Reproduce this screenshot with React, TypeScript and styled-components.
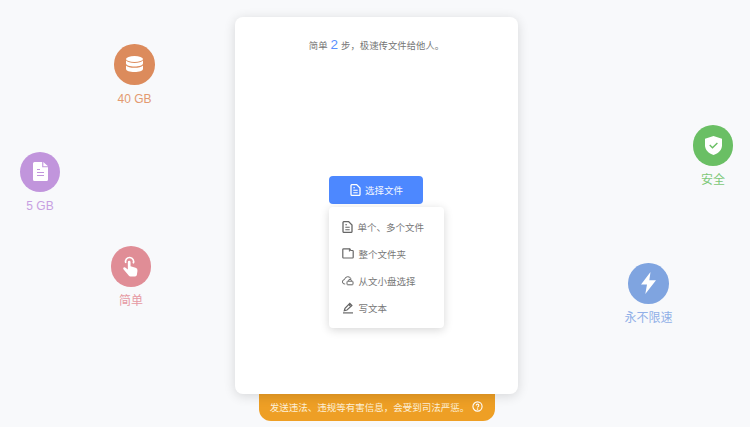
import styled, { createGlobalStyle } from 'styled-components';
import type { ReactNode } from 'react';

const GlobalStyle = createGlobalStyle`
  html, body {
    margin: 0;
    padding: 0;
    height: 100%;
    background: #f8f9fb;
    font-family: "Liberation Sans", "Noto Sans CJK SC", sans-serif;
  }
`;

const Page = styled.main`
  position: relative;
  width: 750px;
  height: 427px;
  overflow: hidden;
  display: flex;
  flex-direction: column;
  align-items: center;
  padding-top: 17px;
  padding-left: 3px;
  box-sizing: border-box;
`;

const Card = styled.section`
  position: relative;
  z-index: 1;
  width: 283px;
  height: 377px;
  box-sizing: border-box;
  background: #fff;
  border-radius: 8px;
  box-shadow: 0 2px 12px rgba(0, 0, 0, 0.14);
  display: flex;
  flex-direction: column;
  align-items: center;
`;

const Intro = styled.p`
  margin: 20px 0 0;
  height: 16px;
  font-size: 9.4px;
  line-height: 16px;
  color: #757575;
`;

const Step = styled.span`
  font-size: 13.5px;
  color: #5a90ff;
  margin: 0 3px;
`;

const Actions = styled.div`
  margin-top: 123px;
  margin-left: 20px;
  width: 115px;
`;

const PickButton = styled.button`
  display: flex;
  align-items: center;
  justify-content: center;
  gap: 4px;
  width: 94px;
  height: 28px;
  padding: 0 0 0 1px;
  border: 0;
  border-radius: 4px;
  background: #4d88ff;
  color: #f4f7ff;
  font: inherit;
  font-size: 9.5px;
`;

const Menu = styled.ul`
  list-style: none;
  margin: 3px 0 0;
  padding: 6px 0;
  width: 115px;
  height: 121px;
  box-sizing: border-box;
  background: #fff;
  border-radius: 4px;
  box-shadow: 0 2px 10px rgba(0, 0, 0, 0.16);
  display: flex;
  flex-direction: column;
`;

const MenuItem = styled.li`
  display: flex;
  align-items: center;
  gap: 5px;
  height: 27px;
  padding-left: 12.5px;
  font-size: 9.5px;
  color: #777;
  svg {
    flex: none;
  }
`;

const Notice = styled.footer`
  width: 236px;
  height: 27px;
  padding-bottom: 2px;
  box-sizing: border-box;
  background: #ee9f25;
  border-radius: 0 0 12px 12px;
  color: #fdf0d8;
  font-size: 9.5px;
  display: flex;
  align-items: center;
  justify-content: center;
  gap: 3px;
`;

const Feature = styled.div<{ $x: number; $y: number }>`
  position: absolute;
  left: ${({ $x }) => $x}px;
  top: ${({ $y }) => $y}px;
  width: 80px;
  margin-left: -40px;
  display: flex;
  flex-direction: column;
  align-items: center;
  gap: 6px;
`;

const Bubble = styled.div<{ $color: string }>`
  width: 40.5px;
  height: 40.5px;
  border-radius: 50%;
  background: ${({ $color }) => $color};
  display: flex;
  align-items: center;
  justify-content: center;
`;

const FeatureLabel = styled.span<{ $color: string }>`
  font-size: 12px;
  line-height: 16px;
  color: ${({ $color }) => $color};
`;

const DocIcon = ({ size = 11, color = '#fff' }: { size?: number; color?: string }) => (
  <svg width={size} height={size + 1} viewBox="0 0 11 12" fill="none" stroke={color} strokeWidth="1.3">
    <path d="M1 1.600a1 1 0 0 1 1-1h4.600L10 4v6.400a1 1 0 0 1-1 1H2a1 1 0 0 1-1-1z" />
    <path d="M3.300 6.200h4.400M3.300 8.700h4.400M3.300 3.800h1.700" strokeWidth="1.100" />
  </svg>
);

const FolderIcon = () => (
  <svg width="12" height="11" viewBox="0 0 12 11" fill="none" stroke="#666" strokeWidth="1.200">
    <path d="M.8 1.600a.8.800 0 0 1 .8-.8h6.200l1 1.700h1.600a.8.800 0 0 1 .8.800v5.900a.8.800 0 0 1-.8.800H1.600a.8.800 0 0 1-.8-.8z" />
    <path d="M7.400.8v2.700" strokeWidth="1" />
  </svg>
);

const CloudIcon = () => (
  <svg width="12" height="11" viewBox="0 0 12 11" fill="none" stroke="#666" strokeWidth="1">
    <path d="M3.200 9H2.800a2.200 2.200 0 0 1-.3-4.400A3.400 3.400 0 0 1 9 3.800" />
    <rect x="5" y="6.200" width="6" height="3.600" rx=".7" />
    <path d="M6.600 6.200V5.600a1.400 1.400 0 0 1 2.800 0v.6" />
  </svg>
);

const PenIcon = () => (
  <svg width="12" height="12" viewBox="0 0 12 12" fill="none" stroke="#666" strokeWidth="1.200">
    <path d="M2.300 8.600 3 6.300 7.800 1.400l2.100 2.100L5 8z" />
    <path d="m6.800 2.500 2.100 2.100" />
    <path d="M1 10.900h10" />
  </svg>
);

const HelpIcon = () => (
  <svg width="11" height="11" viewBox="0 0 12 12" fill="none" stroke="#fff" strokeWidth="1.200">
    <circle cx="6" cy="6" r="5" />
    <path d="M4.600 4.800a1.400 1.400 0 1 1 2.200 1.200c-.5.300-.8.600-.8 1.100" />
    <circle cx="6" cy="8.800" r=".3" fill="#fff" />
  </svg>
);

const DatabaseGlyph = () => (
  <svg width="17" height="16" viewBox="0 0 17 16" fill="#fff">
    <ellipse cx="8.500" cy="3" rx="8.500" ry="3" />
    <path d="M0 4.600c1.400 1.500 4.600 2.300 8.500 2.300s7.100-.8 8.500-2.300v3c0 1.700-3.800 3-8.500 3S0 9.300 0 7.600z" />
    <path d="M0 9.400c1.400 1.500 4.600 2.300 8.500 2.300s7.100-.8 8.500-2.300V13c0 1.700-3.800 3-8.500 3S0 14.700 0 13z" />
  </svg>
);

const FileGlyph = () => (
  <svg width="15" height="19" viewBox="0 0 15 19">
    <path fill="#fff" d="M1.500 0h7.700v5.200h5.800v12.300a1.500 1.500 0 0 1-1.500 1.500h-12A1.500 1.500 0 0 1 0 17.500v-16A1.500 1.500 0 0 1 1.500 0z" />
    <path fill="#fff" d="M10.300 0 15 4.200h-4.700z" />
    <path stroke="#c195dc" strokeWidth="1.100" d="M4 7.500h3M4 10.500h7M4 13.500h7" />
  </svg>
);

const TouchGlyph = () => (
  <svg width="18" height="21" viewBox="0 0 20 23" fill="none">
    <path stroke="#fff" strokeWidth="1.800" d="M4.200 7.500a4.500 4.500 0 1 1 8.200.6" />
    <path fill="#fff" d="M6.500 6.700a1.500 1.500 0 0 1 3 0v4.600l5.600 1.500a3 3 0 0 1 2.100 3.300L16.500 21a2 2 0 0 1-2 1.600H9.300a2 2 0 0 1-1.600-.8L1.600 14.500a1.400 1.400 0 0 1 2-1.900l2.900 2.300z" />
  </svg>
);

const ShieldGlyph = () => (
  <svg width="17" height="19" viewBox="0 0 17 19">
    <path fill="#fff" d="M8.500 0 17 2.700v6.500c0 4.800-3.600 8.200-8.500 9.800C3.600 17.400 0 14 0 9.200V2.700z" />
    <path fill="none" stroke="#6abf64" strokeWidth="1.400" d="m4.700 9.100 2.800 2.600 4.900-4.800" />
  </svg>
);

const BoltGlyph = () => (
  <svg width="15" height="22" viewBox="0 0 15 22">
    <path fill="#fff" d="M9.500 0 0 12.600h6L4.300 22 15 8.300H8.300z" />
  </svg>
);

const features: { x: number; y: number; color: string; text: string; label: string; icon: ReactNode }[] = [
  { x: 134.500, y: 44, color: '#dc8b5c', text: '#e39a70', label: '40 GB', icon: <DatabaseGlyph /> },
  { x: 40, y: 151.500, color: '#c195dc', text: '#c79fe2', label: '5 GB', icon: <FileGlyph /> },
  { x: 131, y: 246, color: '#e08d96', text: '#e69aa3', label: '简单', icon: <TouchGlyph /> },
  { x: 713, y: 125, color: '#6abf64', text: '#7cc877', label: '安全', icon: <ShieldGlyph /> },
  { x: 648.500, y: 263, color: '#7fa4e0', text: '#91b0e8', label: '永不限速', icon: <BoltGlyph /> },
];

export default function App() {
  return (
    <Page>
      <GlobalStyle />
      {features.map((f) => (
        <Feature key={f.label} $x={f.x} $y={f.y}>
          <Bubble $color={f.color}>{f.icon}</Bubble>
          <FeatureLabel $color={f.text}>{f.label}</FeatureLabel>
        </Feature>
      ))}
      <Card>
        <Intro>
          简单<Step>2</Step>步，极速传文件给他人。
        </Intro>
        <Actions>
          <PickButton>
            <DocIcon />
            选择文件
          </PickButton>
          <Menu>
            <MenuItem>
              <DocIcon color="#666" />
              单个、多个文件
            </MenuItem>
            <MenuItem>
              <FolderIcon />
              整个文件夹
            </MenuItem>
            <MenuItem>
              <CloudIcon />
              从文小盘选择
            </MenuItem>
            <MenuItem>
              <PenIcon />
              写文本
            </MenuItem>
          </Menu>
        </Actions>
      </Card>
      <Notice>
        发送违法、违规等有害信息，会受到司法严惩。
        <HelpIcon />
      </Notice>
    </Page>
  );
}
